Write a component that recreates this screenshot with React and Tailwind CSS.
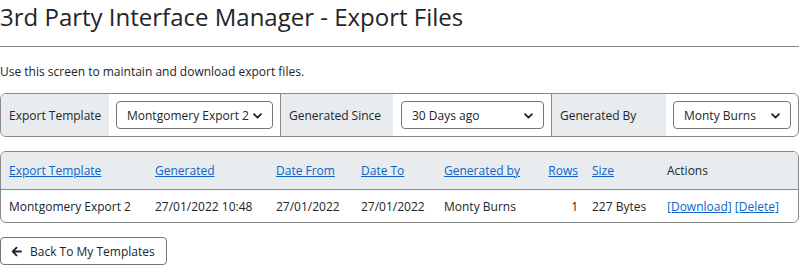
import React from "react";

function Chevron() {
  return (
    <svg width="11" height="11" viewBox="0 0 16 16" className="shrink-0">
      <path d="M3 6l5 5 5-5" fill="none" stroke="#222" strokeWidth="2.6" strokeLinecap="round" strokeLinejoin="round" />
    </svg>
  );
}

function Select({ value, width }) {
  return (
    <div className={`flex items-center justify-between h-[28px] border border-[#767676] rounded-[4px] bg-white pl-[10px] pr-[9px] ${width}`}>
      <span className="whitespace-nowrap overflow-hidden">{value}</span>
      <Chevron />
    </div>
  );
}

export default function App() {
  const font = { fontFamily: '"Open Sans", sans-serif' };
  const link = "text-[#0d63c9] underline";
  return (
    <div className="w-[799px] h-[266px] bg-white text-[#212529] text-[12px] leading-[17px] overflow-hidden" style={font}>
      <h1 className="text-[24px] leading-[33px] font-normal text-[#212529]">3rd Party Interface Manager - Export Files</h1>
      <div className="mt-[13px] border-t border-[#8a8a8a]"></div>
      <p className="mt-[16px]">Use this screen to maintain and download export files.</p>

      <div className="mt-[13px] flex h-[44px] w-[799px] border border-[#8a8a8a] rounded-[6px] overflow-hidden">
        <div className="flex items-center bg-[#e9ecef] pl-[8px] w-[108px]">Export Template</div>
        <div className="flex items-center px-[7px] border-r border-[#8a8a8a]">
          <Select value="Montgomery Export 2" width="w-[157px]" />
        </div>
        <div className="flex items-center bg-[#e9ecef] pl-[8px] w-[112px]">Generated Since</div>
        <div className="flex items-center pl-[8px] pr-[7px] border-r border-[#8a8a8a]">
          <Select value="30 Days ago" width="w-[143px]" />
        </div>
        <div className="flex items-center bg-[#e9ecef] pl-[8px] w-[114px]">Generated By</div>
        <div className="flex items-center px-[7px] flex-1">
          <Select value="Monty Burns" width="w-[118px]" />
        </div>
      </div>

      <div className="mt-[14px] w-[799px] border border-[#8a8a8a] rounded-[6px] overflow-hidden">
        <div className="flex h-[38px] items-center bg-[#e9ecef] border-b border-[#8a8a8a]">
          <span className="pl-[8px] w-[154px]"><a className={link}>Export Template</a></span>
          <span className="w-[121px]"><a className={link}>Generated</a></span>
          <span className="w-[85px]"><a className={link}>Date From</a></span>
          <span className="w-[83px]"><a className={link}>Date To</a></span>
          <span className="w-[104px]"><a className={link}>Generated by</a></span>
          <span className="w-[30px] text-right"><a className={link}>Rows</a></span>
          <span className="ml-[14px] w-[75px]"><a className={link}>Size</a></span>
          <span>Actions</span>
        </div>
        <div className="flex h-[32px] items-center">
          <span className="pl-[8px] w-[154px]">Montgomery Export 2</span>
          <span className="w-[121px]">27/01/2022 10:48</span>
          <span className="w-[85px]">27/01/2022</span>
          <span className="w-[83px]">27/01/2022</span>
          <span className="w-[104px]">Monty Burns</span>
          <span className="w-[30px] text-right">1</span>
          <span className="ml-[14px] w-[75px]">227 Bytes</span>
          <span className="text-[#0d63c9]">
            <a className="underline">[Download]</a> <a className="underline">[Delete]</a>
          </span>
        </div>
      </div>

      <button className="mt-[14px] flex items-center gap-[8px] h-[28px] w-[167px] pl-[10px] border border-[#767676] rounded-[4px] bg-white text-[12px] text-[#212529]" style={font}>
        <svg width="11" height="11" viewBox="0 0 16 16">
          <path d="M14.5 8H2.5M8 2.5L2.5 8 8 13.5" fill="none" stroke="#222" strokeWidth="2.6" strokeLinecap="round" strokeLinejoin="round" />
        </svg>
        Back To My Templates
      </button>
    </div>
  );
}
